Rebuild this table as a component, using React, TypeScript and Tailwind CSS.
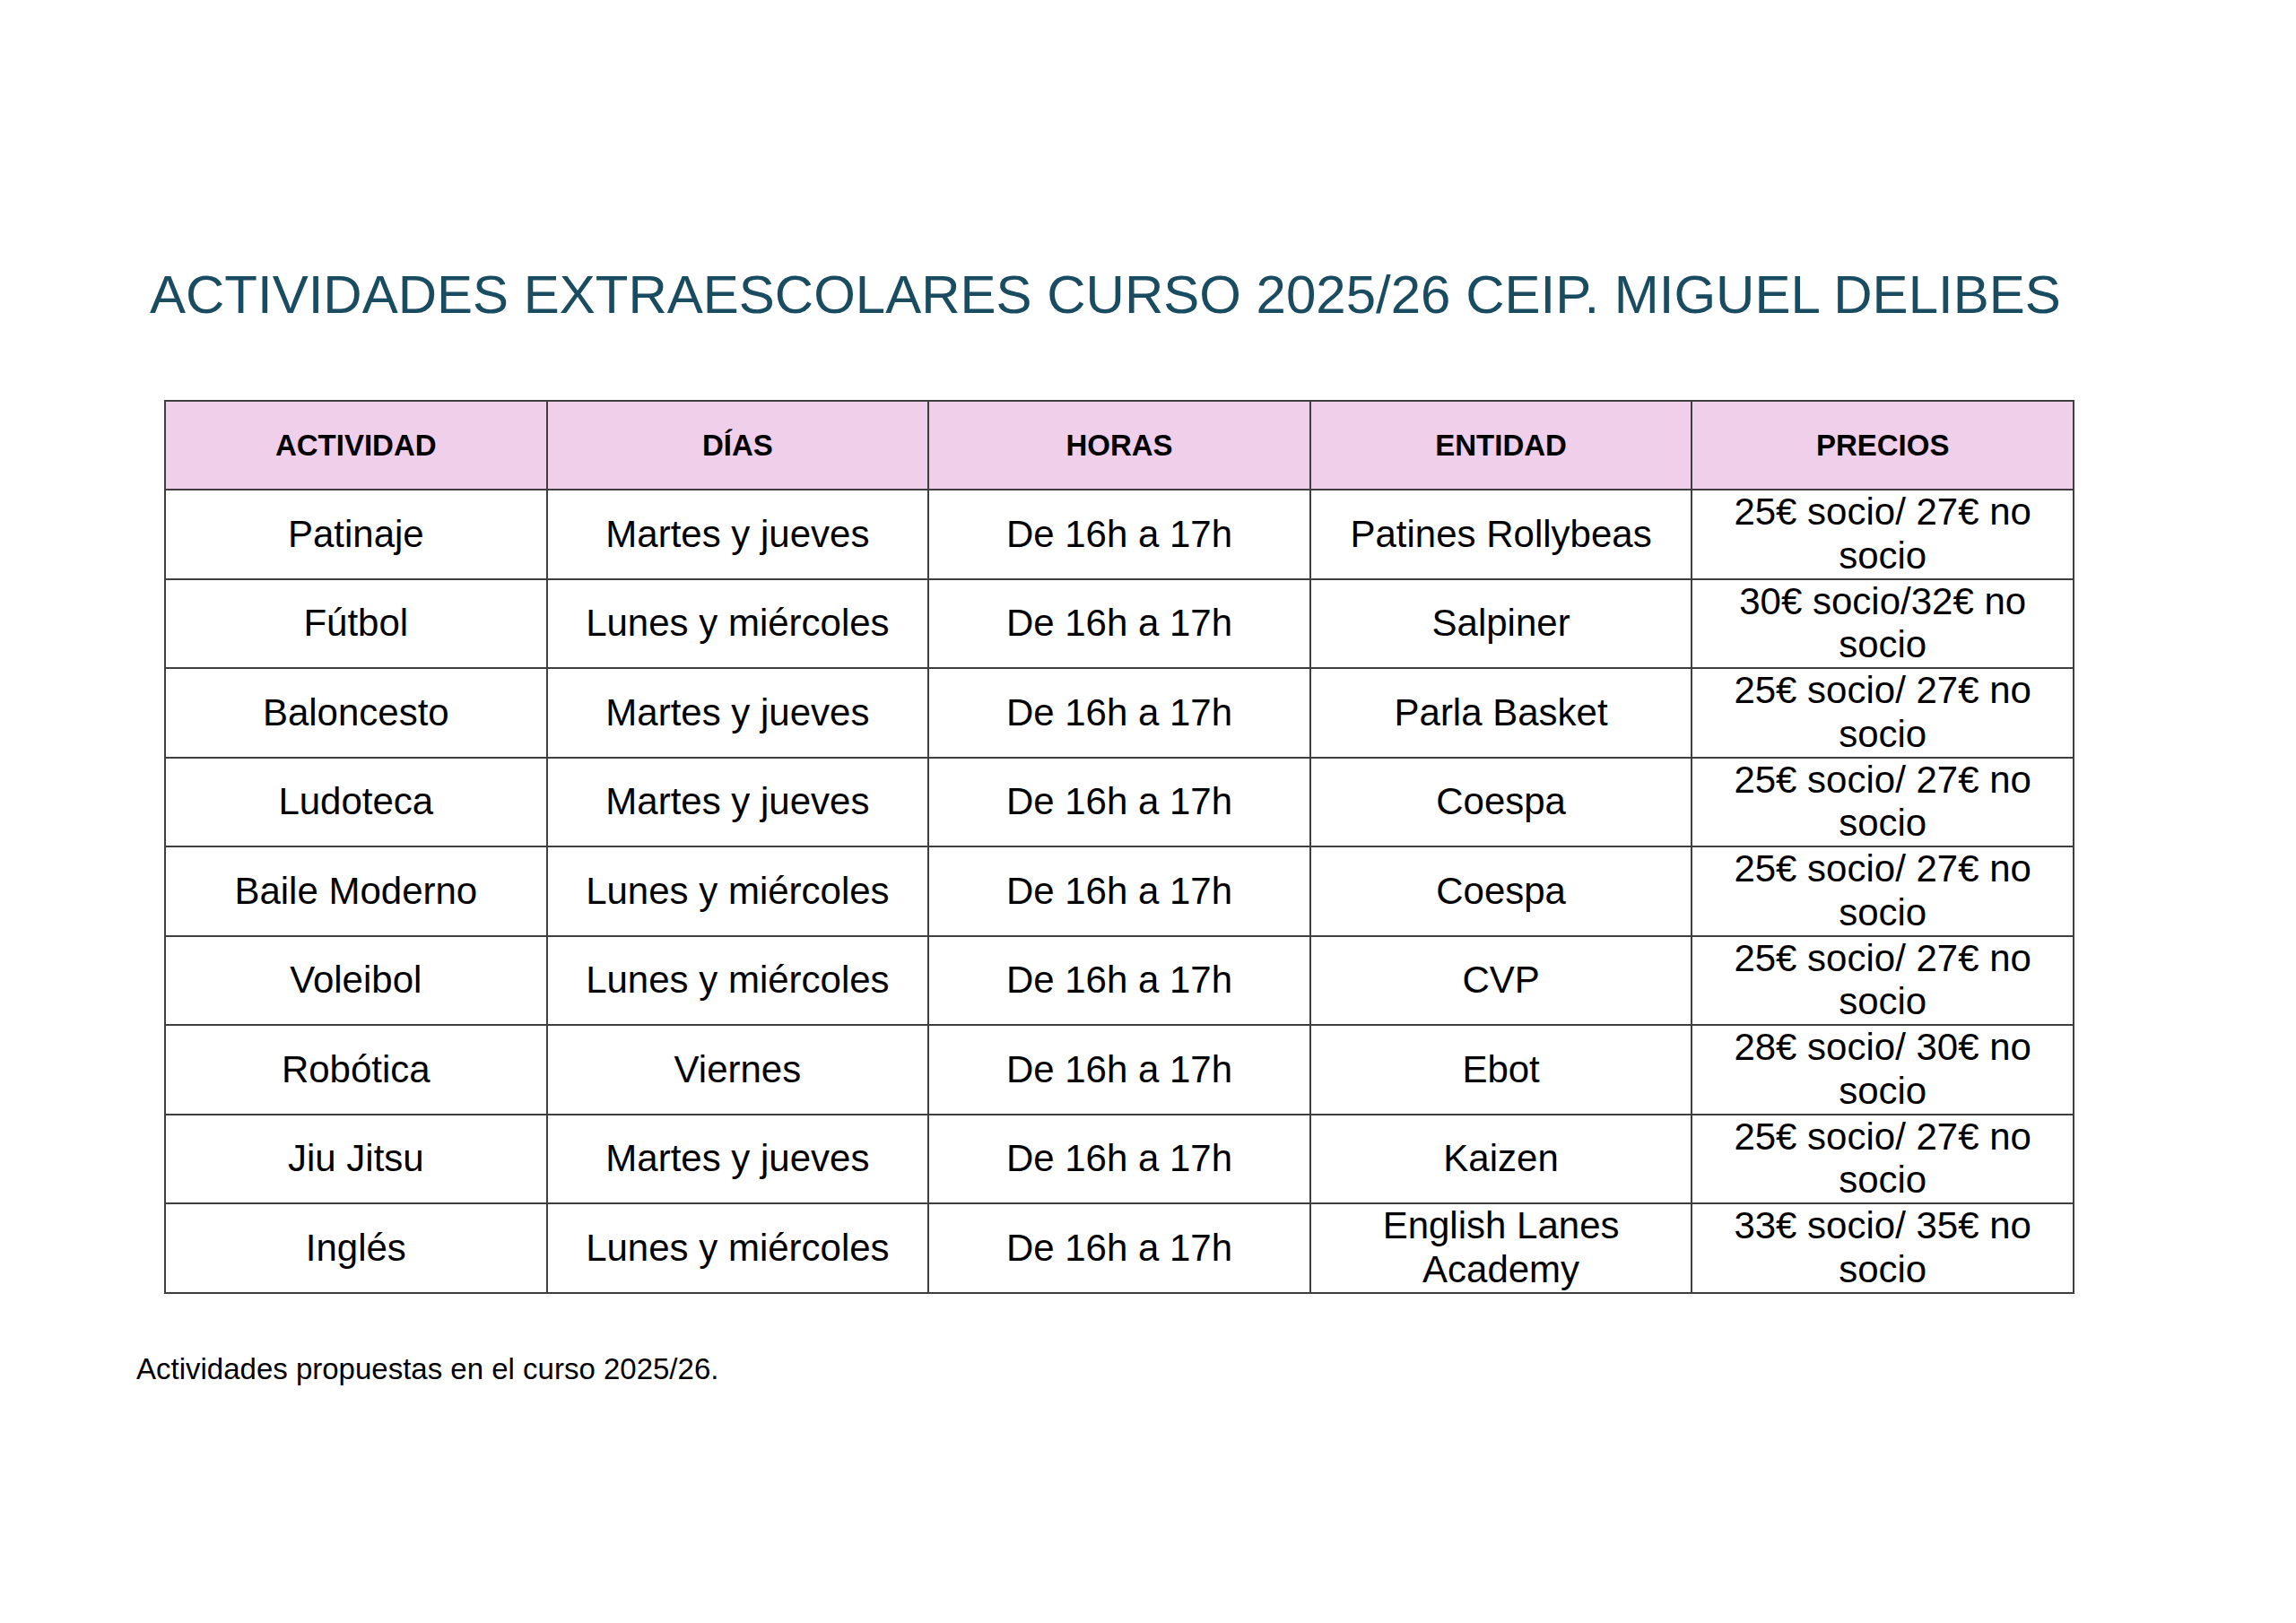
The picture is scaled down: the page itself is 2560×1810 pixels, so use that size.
const headers = ["ACTIVIDAD", "DÍAS", "HORAS", "ENTIDAD", "PRECIOS"]

const rows: string[][] = [
  ["Patinaje", "Martes y jueves", "De 16h a 17h", "Patines Rollybeas", "25€ socio/ 27€ no socio"],
  ["Fútbol", "Lunes y miércoles", "De 16h a 17h", "Salpiner", "30€ socio/32€ no socio"],
  ["Baloncesto", "Martes y jueves", "De 16h a 17h", "Parla Basket", "25€ socio/ 27€ no socio"],
  ["Ludoteca", "Martes y jueves", "De 16h a 17h", "Coespa", "25€ socio/ 27€ no socio"],
  ["Baile Moderno", "Lunes y miércoles", "De 16h a 17h", "Coespa", "25€ socio/ 27€ no socio"],
  ["Voleibol", "Lunes y miércoles", "De 16h a 17h", "CVP", "25€ socio/ 27€ no socio"],
  ["Robótica", "Viernes", "De 16h a 17h", "Ebot", "28€ socio/ 30€ no socio"],
  ["Jiu Jitsu", "Martes y jueves", "De 16h a 17h", "Kaizen", "25€ socio/ 27€ no socio"],
  ["Inglés", "Lunes y miércoles", "De 16h a 17h", "English Lanes Academy", "33€ socio/ 35€ no socio"],
]

export default function App() {
  return (
    <div className="min-h-[1810px] w-[2560px] bg-white font-[family-name:Liberation_Sans,Arial,sans-serif] text-black">
      <div className="pl-[167px] pt-[294px]">
        <h1 className="text-[60px] font-normal leading-[1.15] text-[#194b61]">
          ACTIVIDADES EXTRAESCOLARES CURSO 2025/26 CEIP. MIGUEL DELIBES
        </h1>
      </div>

      <div className="ml-[183px] mt-[83px] grid w-max grid-cols-[repeat(5,425.6px)] border-l-2 border-t-2 border-[#3f3f3f]">
        {headers.map((h) => (
          <div
            key={h}
            className="flex h-[99px] items-center justify-center border-r-2 border-b-2 border-[#3f3f3f] bg-[#f0cfea] text-[33px] font-bold leading-[1.15]"
          >
            {h}
          </div>
        ))}
        {rows.map((row, i) =>
          row.map((cell, j) => (
            <div
              key={`${i}-${j}`}
              className="flex h-[99.5px] items-center justify-center border-r-2 border-b-2 border-[#3f3f3f] px-0.5 text-center text-[42px] leading-[1.15]"
            >
              {cell}
            </div>
          ))
        )}
      </div>

      <p className="ml-[152px] mt-[65px] text-[33px] leading-[1.15]">
        Actividades propuestas en el curso 2025/26.
      </p>
    </div>
  )
}
